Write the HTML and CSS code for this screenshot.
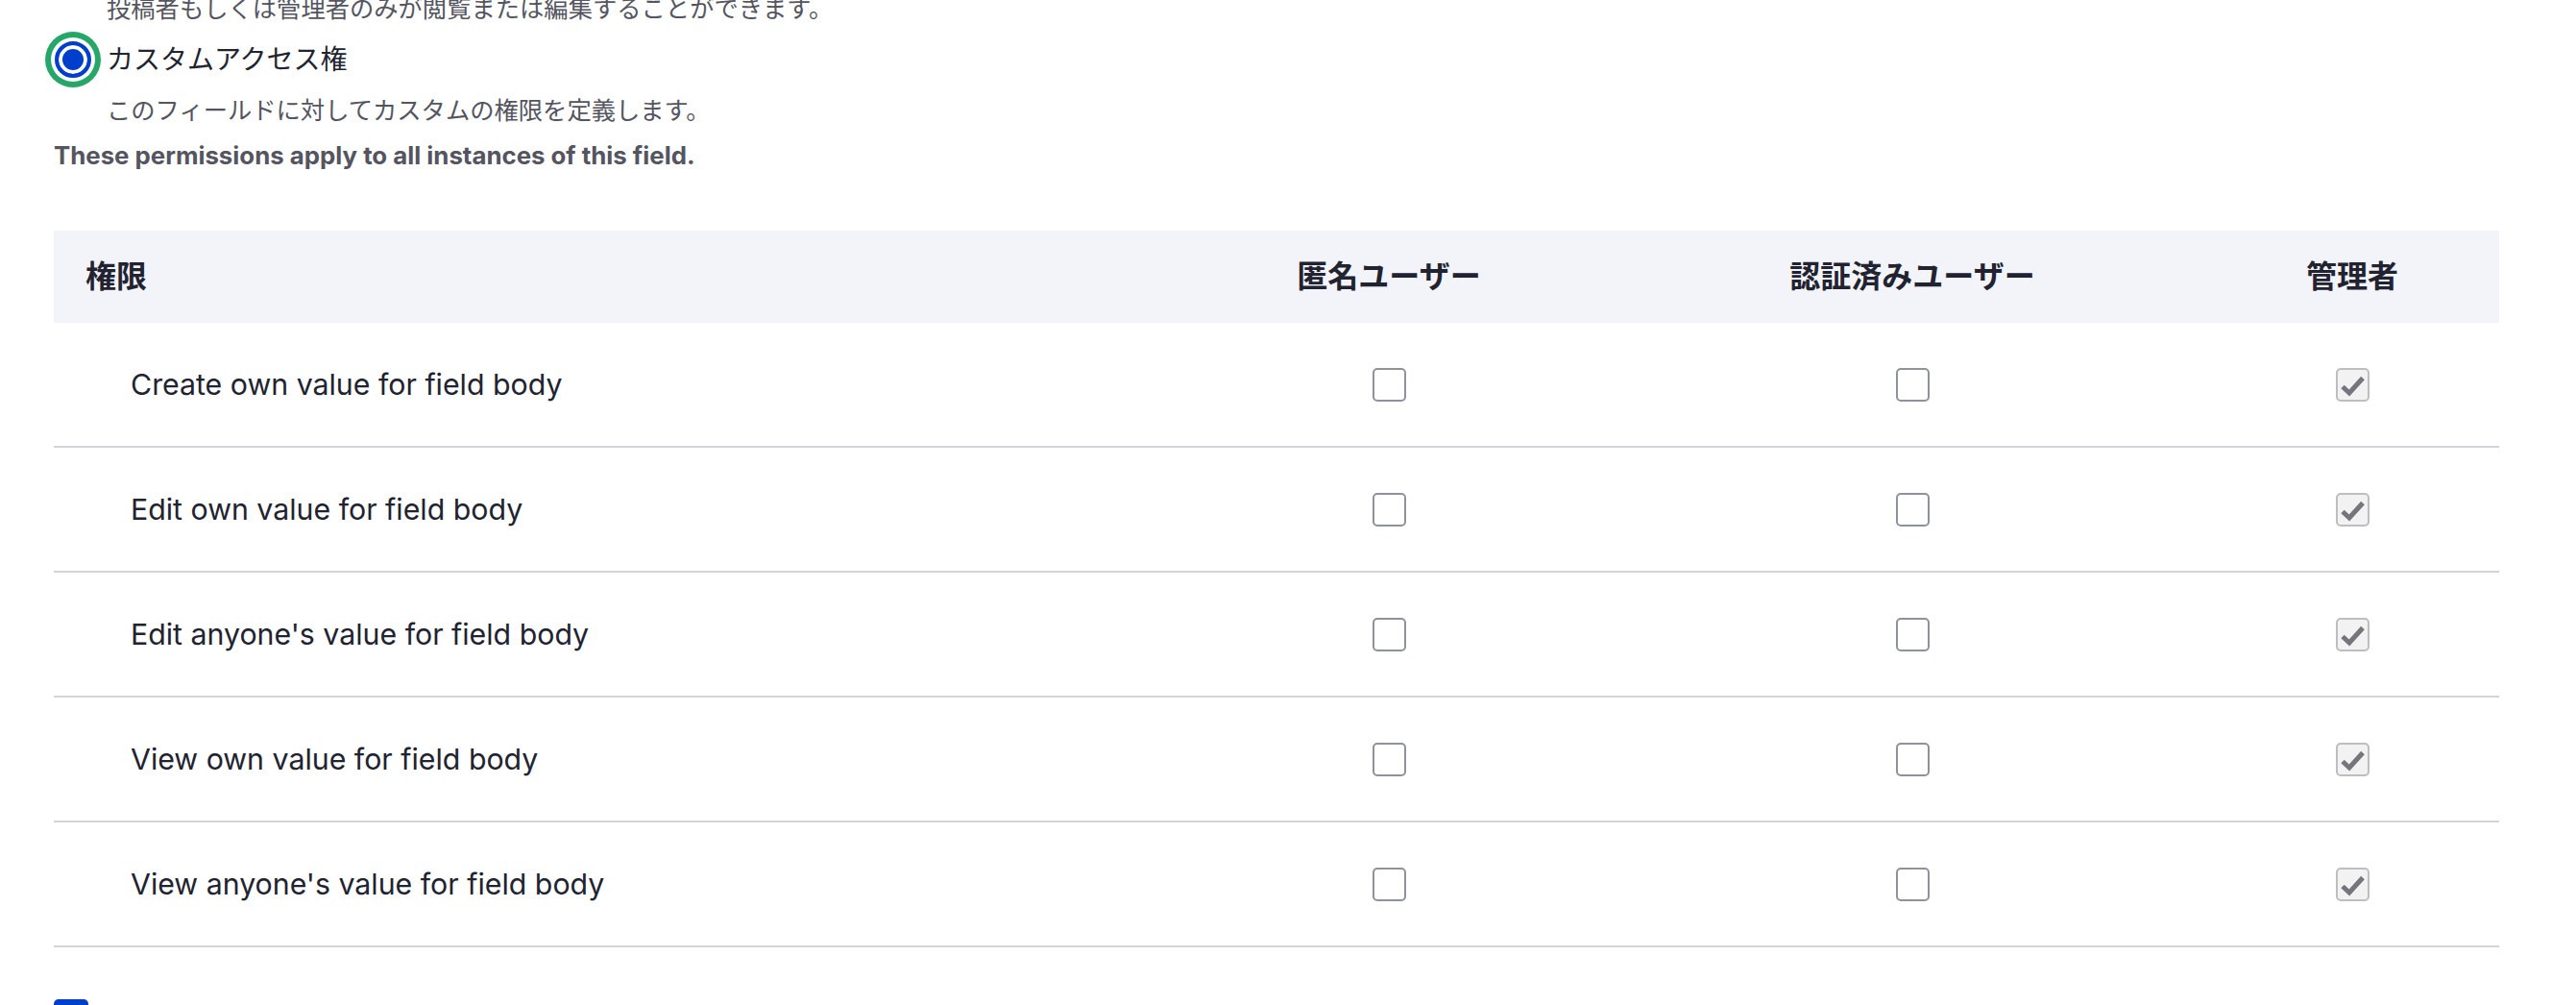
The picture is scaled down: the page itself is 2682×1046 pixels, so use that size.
FILE: index.html
```html
<!DOCTYPE html>
<html lang="ja">
<head>
<meta charset="utf-8">
<title>Field permissions</title>
<link rel="stylesheet" href="styles.css">
</head>
<body>
<div class="page">
  <div class="desc desc-top">投稿者もしくは管理者のみが閲覧または編集することができます。</div>

  <div class="radio-item">
    <span class="radio is-checked is-focused"></span>
    <label class="radio-label">カスタムアクセス権</label>
  </div>
  <div class="desc desc-custom">このフィールドに対してカスタムの権限を定義します。</div>

  <p class="note">These permissions apply to all instances of this field.</p>

  <table class="perm-table">
    <colgroup>
      <col class="col-perm">
      <col class="col-anon">
      <col class="col-auth">
      <col class="col-admin">
    </colgroup>
    <thead>
      <tr>
        <th class="th-perm">権限</th>
        <th>匿名ユーザー</th>
        <th>認証済みユーザー</th>
        <th>管理者</th>
      </tr>
    </thead>
    <tbody>
      <tr>
        <td class="td-perm">Create own value for field body</td>
        <td class="td-cb"><span class="cb"></span></td>
        <td class="td-cb"><span class="cb"></span></td>
        <td class="td-cb"><span class="cb cb-disabled"><svg viewBox="0 0 31 31" class="check"><path d="M5 17.5 L12 24 L26 8.5"/></svg></span></td>
      </tr>
      <tr>
        <td class="td-perm">Edit own value for field body</td>
        <td class="td-cb"><span class="cb"></span></td>
        <td class="td-cb"><span class="cb"></span></td>
        <td class="td-cb"><span class="cb cb-disabled"><svg viewBox="0 0 31 31" class="check"><path d="M5 17.5 L12 24 L26 8.5"/></svg></span></td>
      </tr>
      <tr>
        <td class="td-perm">Edit anyone's value for field body</td>
        <td class="td-cb"><span class="cb"></span></td>
        <td class="td-cb"><span class="cb"></span></td>
        <td class="td-cb"><span class="cb cb-disabled"><svg viewBox="0 0 31 31" class="check"><path d="M5 17.5 L12 24 L26 8.5"/></svg></span></td>
      </tr>
      <tr>
        <td class="td-perm">View own value for field body</td>
        <td class="td-cb"><span class="cb"></span></td>
        <td class="td-cb"><span class="cb"></span></td>
        <td class="td-cb"><span class="cb cb-disabled"><svg viewBox="0 0 31 31" class="check"><path d="M5 17.5 L12 24 L26 8.5"/></svg></span></td>
      </tr>
      <tr>
        <td class="td-perm">View anyone's value for field body</td>
        <td class="td-cb"><span class="cb"></span></td>
        <td class="td-cb"><span class="cb"></span></td>
        <td class="td-cb"><span class="cb cb-disabled"><svg viewBox="0 0 31 31" class="check"><path d="M5 17.5 L12 24 L26 8.5"/></svg></span></td>
      </tr>
    </tbody>
  </table>

  <div class="checkbox-item">
    <span class="cb cb-checked"></span>
  </div>
</div>
</body>
</html>
```

FILE: styles.css
```css
html, body {
  margin: 0;
  padding: 0;
  background: #ffffff;
}

body {
  font-family: "Inter", "Noto Sans CJK JP", sans-serif;
  color: #222330;
  overflow: hidden;
}

.page {
  padding-left: 56px;
  width: 2546px;
}

.desc {
  margin-left: 55px;
  font-size: 25.3px;
  line-height: 36px;
  color: #545560;
}

.desc-top {
  margin-top: -9px;
}

.radio-item {
  display: flex;
  align-items: center;
  height: 40px;
  margin-top: 15px;
}

.radio {
  flex: none;
  box-sizing: border-box;
  width: 38px;
  height: 38px;
  margin-left: 1px;
  border-radius: 50%;
  border: 4px solid #003ecc;
  background: #ffffff;
}

.radio.is-checked {
  background: #003ecc;
  box-shadow: inset 0 0 0 4px #ffffff;
}

.radio.is-focused {
  box-shadow: inset 0 0 0 4px #ffffff, 0 0 0 4px #ffffff, 0 0 0 10px #26a769;
}

.radio-label {
  margin-left: 16px;
  font-size: 28px;
  line-height: 40px;
  color: #222330;
}

.desc-custom {
  margin-top: 15px;
}

.note {
  margin: 11px 0 0;
  font-size: 25.8px;
  line-height: 36px;
  font-weight: 700;
  color: #545560;
}

.perm-table {
  margin-top: 60px;
  width: 2546px;
  table-layout: fixed;
  border-collapse: separate;
  border-spacing: 0;
}

.col-perm { width: 1150px; }
.col-anon { width: 480px; }
.col-auth { width: 610px; }
.col-admin { width: 306px; }

.perm-table th {
  box-sizing: border-box;
  height: 96px;
  padding: 0 0 6px;
  background: #f3f4f9;
  font-size: 32px;
  font-weight: 700;
  color: #222330;
  text-align: center;
  vertical-align: middle;
}

.perm-table th.th-perm {
  text-align: left;
  padding-left: 33px;
}

.perm-table td {
  box-sizing: border-box;
  height: 130px;
  padding: 0;
  border-bottom: 2px solid #d3d4d9;
  text-align: center;
  vertical-align: middle;
  font-size: 30.3px;
  line-height: 40px;
  color: #222330;
}

.perm-table td.td-perm {
  text-align: left;
  padding-left: 80px;
}

.cb {
  display: inline-block;
  box-sizing: border-box;
  width: 35px;
  height: 35px;
  border: 2px solid #8e929c;
  border-radius: 5px;
  background: #ffffff;
  vertical-align: middle;
}

.td-cb .cb {
  display: block;
  margin: 0 auto;
}

.cb-disabled {
  border-color: #bdbdc2;
  background: #f2f2f3;
}

.check {
  display: block;
  width: 31px;
  height: 31px;
  fill: none;
  stroke: #75767d;
  stroke-width: 5;
  stroke-linejoin: miter;
}

.checkbox-item {
  display: flex;
  align-items: flex-start;
  margin-top: 54px;
}

.cb-checked {
  width: 36px;
  height: 36px;
  border: 0;
  background: #003ecc;
  border-radius: 5px;
}
```
